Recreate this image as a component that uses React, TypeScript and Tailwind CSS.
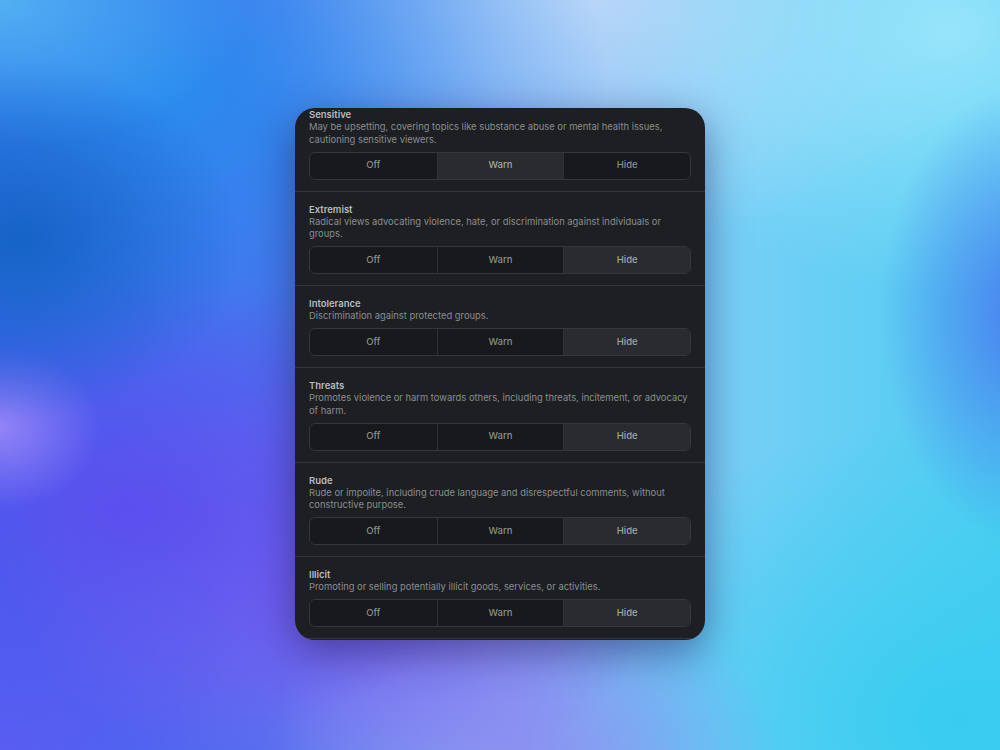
import React from "react";

type Level = "Off" | "Warn" | "Hide";

const sections: { title: string; desc: string; value: Level }[] = [
  {
    title: "Sensitive",
    desc: "May be upsetting, covering topics like substance abuse or mental health issues, cautioning sensitive viewers.",
    value: "Warn",
  },
  {
    title: "Extremist",
    desc: "Radical views advocating violence, hate, or discrimination against individuals or groups.",
    value: "Hide",
  },
  {
    title: "Intolerance",
    desc: "Discrimination against protected groups.",
    value: "Hide",
  },
  {
    title: "Threats",
    desc: "Promotes violence or harm towards others, including threats, incitement, or advocacy of harm.",
    value: "Hide",
  },
  {
    title: "Rude",
    desc: "Rude or impolite, including crude language and disrespectful comments, without constructive purpose.",
    value: "Hide",
  },
  {
    title: "Illicit",
    desc: "Promoting or selling potentially illicit goods, services, or activities.",
    value: "Hide",
  },
];

const levels: Level[] = ["Off", "Warn", "Hide"];

function Segmented({ value }: { value: Level }) {
  return (
    <div className="mt-[5.5px] grid h-[28px] grid-cols-3 overflow-hidden rounded-[6px] border border-[#34373c] bg-[#17191c]">
      {levels.map((l, i) => (
        <button
          key={l}
          className={
            "flex items-center justify-center text-[9.5px] font-medium " +
            (i > 0 ? "border-l border-[#2e3135] " : "") +
            (l === value ? "bg-[#2a2b2e] text-[#a3a5a9]" : "text-[#8a8d92]")
          }
        >
          {l}
        </button>
      ))}
    </div>
  );
}

export default function App() {
  return (
    <div
      className="flex h-[750px] w-[1000px] items-start justify-center bg-[radial-gradient(ellipse_22%_24%_at_2%_32%,#1563c6_0%,transparent_100%),radial-gradient(ellipse_10%_11%_at_0%_57%,#9383f6_0%,transparent_100%),radial-gradient(ellipse_38%_32%_at_13%_68%,#5c4fee_0%,transparent_100%),radial-gradient(ellipse_32%_28%_at_34%_78%,#8468f1_0%,transparent_100%),radial-gradient(ellipse_30%_26%_at_0%_100%,#5a5cf2_0%,transparent_100%),radial-gradient(ellipse_26%_22%_at_52%_100%,#8a92f0_0%,transparent_100%),radial-gradient(ellipse_25%_20%_at_0%_0%,#52b0f2_0%,transparent_100%),radial-gradient(ellipse_45%_40%_at_16%_12%,#2a8cee_0%,transparent_100%),radial-gradient(ellipse_14%_30%_at_102%_42%,#4a80f0_0%,transparent_100%),radial-gradient(ellipse_42%_40%_at_96%_96%,#38cdf0_0%,transparent_100%),radial-gradient(ellipse_35%_35%_at_95%_4%,#96e4fb_0%,transparent_100%),radial-gradient(ellipse_40%_32%_at_60%_0%,#b7d5f8_0%,transparent_100%),linear-gradient(90deg,#3b66ee_0%,#4d72ee_28%,#88aef4_50%,#78cff7_72%,#4ecdf0_100%)] pt-[108px]"
      style={{ fontFamily: "Inter, 'Noto Sans', sans-serif" }}
    >
      <div className="h-[532px] w-[410px] overflow-hidden rounded-[20px] bg-[#1d1f22] shadow-[0_12px_40px_rgba(30,20,80,0.5)]">
        <div className="-mt-[11px]">
          {sections.map((s) => (
            <div key={s.title} className="border-b border-[#34373b] px-[14px] pb-[11px] pt-[11px]">
              <div className="text-[9.5px] font-semibold leading-[13px] text-[#b9bbbe]">{s.title}</div>
              <div className="text-[9.4px] leading-[12.5px] text-[#8a8d91]">{s.desc}</div>
              <Segmented value={s.value} />
            </div>
          ))}
        </div>
      </div>
    </div>
  );
}
